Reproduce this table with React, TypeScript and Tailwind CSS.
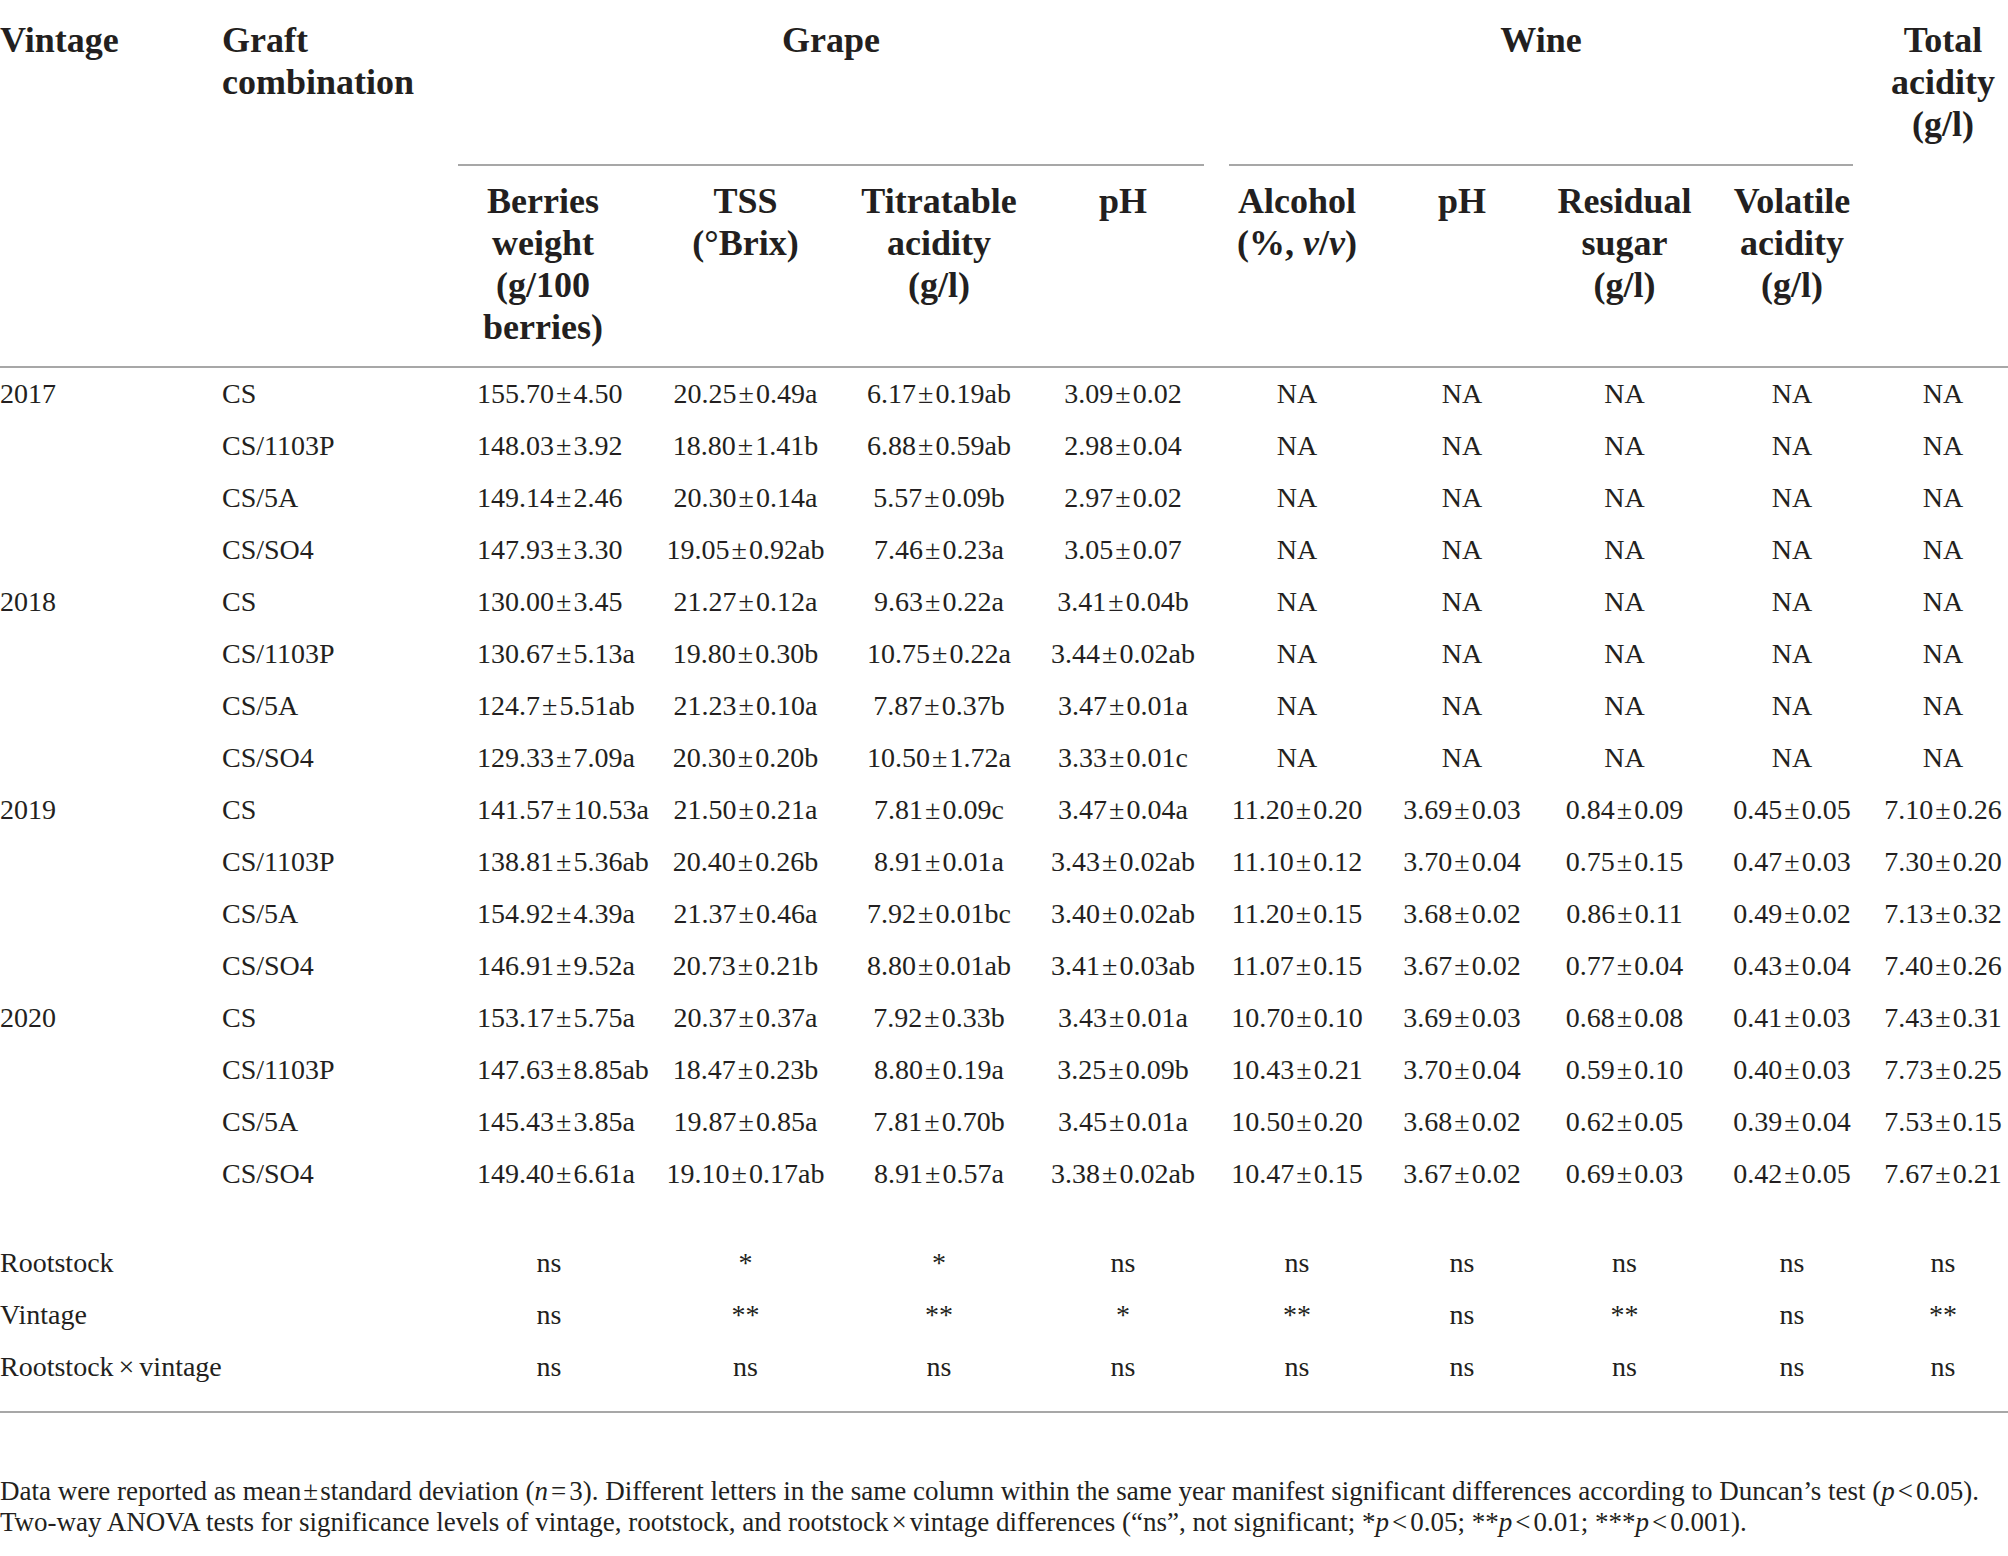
import React from 'react';

const cols = 'grid grid-cols-[222px_236px_188px_199px_188px_180px_168px_162px_163px_172px_130px]';

type Row = { year?: string; graft: string; vals: string[] };

const rows: Row[] = [
  { year: '2017', graft: 'CS', vals: ['155.70±4.50', '20.25±0.49a', '6.17±0.19ab', '3.09±0.02', 'NA', 'NA', 'NA', 'NA', 'NA'] },
  { graft: 'CS/1103P', vals: ['148.03±3.92', '18.80±1.41b', '6.88±0.59ab', '2.98±0.04', 'NA', 'NA', 'NA', 'NA', 'NA'] },
  { graft: 'CS/5A', vals: ['149.14±2.46', '20.30±0.14a', '5.57±0.09b', '2.97±0.02', 'NA', 'NA', 'NA', 'NA', 'NA'] },
  { graft: 'CS/SO4', vals: ['147.93±3.30', '19.05±0.92ab', '7.46±0.23a', '3.05±0.07', 'NA', 'NA', 'NA', 'NA', 'NA'] },
  { year: '2018', graft: 'CS', vals: ['130.00±3.45', '21.27±0.12a', '9.63±0.22a', '3.41±0.04b', 'NA', 'NA', 'NA', 'NA', 'NA'] },
  { graft: 'CS/1103P', vals: ['130.67±5.13a', '19.80±0.30b', '10.75±0.22a', '3.44±0.02ab', 'NA', 'NA', 'NA', 'NA', 'NA'] },
  { graft: 'CS/5A', vals: ['124.7±5.51ab', '21.23±0.10a', '7.87±0.37b', '3.47±0.01a', 'NA', 'NA', 'NA', 'NA', 'NA'] },
  { graft: 'CS/SO4', vals: ['129.33±7.09a', '20.30±0.20b', '10.50±1.72a', '3.33±0.01c', 'NA', 'NA', 'NA', 'NA', 'NA'] },
  { year: '2019', graft: 'CS', vals: ['141.57±10.53a', '21.50±0.21a', '7.81±0.09c', '3.47±0.04a', '11.20±0.20', '3.69±0.03', '0.84±0.09', '0.45±0.05', '7.10±0.26'] },
  { graft: 'CS/1103P', vals: ['138.81±5.36ab', '20.40±0.26b', '8.91±0.01a', '3.43±0.02ab', '11.10±0.12', '3.70±0.04', '0.75±0.15', '0.47±0.03', '7.30±0.20'] },
  { graft: 'CS/5A', vals: ['154.92±4.39a', '21.37±0.46a', '7.92±0.01bc', '3.40±0.02ab', '11.20±0.15', '3.68±0.02', '0.86±0.11', '0.49±0.02', '7.13±0.32'] },
  { graft: 'CS/SO4', vals: ['146.91±9.52a', '20.73±0.21b', '8.80±0.01ab', '3.41±0.03ab', '11.07±0.15', '3.67±0.02', '0.77±0.04', '0.43±0.04', '7.40±0.26'] },
  { year: '2020', graft: 'CS', vals: ['153.17±5.75a', '20.37±0.37a', '7.92±0.33b', '3.43±0.01a', '10.70±0.10', '3.69±0.03', '0.68±0.08', '0.41±0.03', '7.43±0.31'] },
  { graft: 'CS/1103P', vals: ['147.63±8.85ab', '18.47±0.23b', '8.80±0.19a', '3.25±0.09b', '10.43±0.21', '3.70±0.04', '0.59±0.10', '0.40±0.03', '7.73±0.25'] },
  { graft: 'CS/5A', vals: ['145.43±3.85a', '19.87±0.85a', '7.81±0.70b', '3.45±0.01a', '10.50±0.20', '3.68±0.02', '0.62±0.05', '0.39±0.04', '7.53±0.15'] },
  { graft: 'CS/SO4', vals: ['149.40±6.61a', '19.10±0.17ab', '8.91±0.57a', '3.38±0.02ab', '10.47±0.15', '3.67±0.02', '0.69±0.03', '0.42±0.05', '7.67±0.21'] },
];

const stats = [
  { label: 'Rootstock', vals: ['ns', '*', '*', 'ns', 'ns', 'ns', 'ns', 'ns', 'ns'] },
  { label: 'Vintage', vals: ['ns', '**', '**', '*', '**', 'ns', '**', 'ns', '**'] },
  { label: 'Rootstock×vintage', vals: ['ns', 'ns', 'ns', 'ns', 'ns', 'ns', 'ns', 'ns', 'ns'] },
];

// splits "a±b" so the sign gets a little air on both sides
function PM({ v, gap = 'mx-[2px]' }: { v: string; gap?: string }) {
  const parts = v.split(/([±×])/);
  if (parts.length < 3) return <>{v}</>;
  return (
    <>
      {parts[0]}
      <span className={gap}>{parts[1]}</span>
      {parts[2]}
    </>
  );
}

export default function App() {
  return (
    <div className="w-[2008px] min-h-[1556px] bg-white text-[#231f20] font-['Liberation_Serif',serif]">
      {/* header */}
      <div className={`${cols} font-bold text-[36px] leading-[42px] border-b-2 border-[#a7a7a7]`}>
        <div className="col-start-1 row-span-2 pt-[19px]">Vintage</div>
        <div className="col-start-2 row-span-2 pt-[19px]">
          Graft
          <br />
          combination
        </div>
        <div className="col-start-3 col-span-4 mr-[9px] h-[166px] pt-[19px] text-center border-b-2 border-[#a7a7a7]">Grape</div>
        <div className="col-start-7 col-span-4 ml-[16px] mr-[25px] h-[166px] pt-[19px] text-center border-b-2 border-[#a7a7a7]">Wine</div>
        <div className="col-start-11 row-span-2 pt-[19px] text-center">
          Total
          <br />
          acidity
          <br />
          (g/l)
        </div>

        <div className="col-start-3 pt-[14px] pb-[18px] pr-[18px] text-center">
          Berries
          <br />
          weight
          <br />
          (g/100
          <br />
          berries)
        </div>
        <div className="pt-[14px] text-center">
          TSS
          <br />
          (°Brix)
        </div>
        <div className="pt-[14px] text-center">
          Titratable
          <br />
          acidity
          <br />
          (g/l)
        </div>
        <div className="pt-[14px] text-center">pH</div>
        <div className="pt-[14px] text-center">
          Alcohol
          <br />
          (%, <i>v</i>/<i>v</i>)
        </div>
        <div className="pt-[14px] text-center">pH</div>
        <div className="pt-[14px] text-center">
          Residual
          <br />
          sugar
          <br />
          (g/l)
        </div>
        <div className="pt-[14px] text-center">
          Volatile
          <br />
          acidity
          <br />
          (g/l)
        </div>
      </div>

      {/* body */}
      <div className="border-b-2 border-[#a7a7a7] pb-[18px] text-[28px] leading-[52px] whitespace-nowrap">
        {rows.map((r, i) => (
          <div key={i} className={cols}>
            <div>{r.year ?? ''}</div>
            <div>{r.graft}</div>
            {r.vals.map((v, j) => (
              <div key={j} className={j === 0 ? 'pl-[19px]' : 'text-center'}>
                <PM v={v} />
              </div>
            ))}
          </div>
        ))}

        <div className="h-[37px]" />

        {stats.map((s, i) => (
          <div key={i} className={cols}>
            <div className="col-span-2">
              <PM v={s.label} gap="mx-[5px]" />
            </div>
            {s.vals.map((v, j) => (
              <div key={j} className={j === 0 ? 'pr-[6px] text-center' : 'text-center'}>
                {v}
              </div>
            ))}
          </div>
        ))}
      </div>

      {/* notes */}
      <div className="mt-[63px] text-[27px] leading-[31px] whitespace-nowrap">
        <p>
          Data were reported as mean<span className="mx-[2px]">±</span>standard deviation (<i>n</i>
          <span className="mx-[3px]">=</span>3). Different letters in the same column within the same year manifest
          significant differences according to Duncan’s test (<i>p</i>
          <span className="mx-[3px]">&lt;</span>0.05).
        </p>
        <p>
          Two-way ANOVA tests for significance levels of vintage, rootstock, and rootstock
          <span className="mx-[3px]">×</span>vintage differences (“ns”, not significant; *<i>p</i>
          <span className="mx-[3px]">&lt;</span>0.05; **<i>p</i>
          <span className="mx-[3px]">&lt;</span>0.01; ***<i>p</i>
          <span className="mx-[3px]">&lt;</span>0.001).
        </p>
      </div>
    </div>
  );
}
